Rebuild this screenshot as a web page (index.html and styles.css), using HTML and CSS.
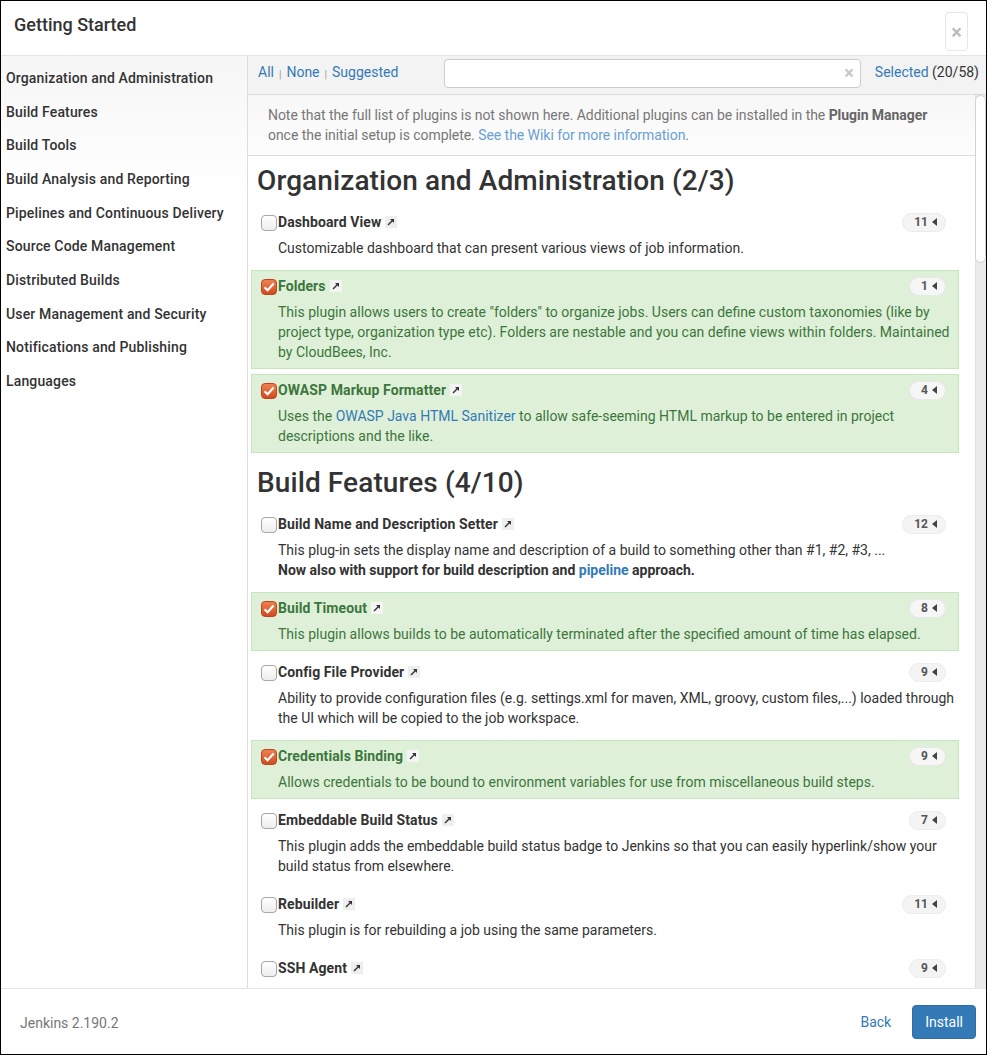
FILE: index.html
```html
<!DOCTYPE html>
<html>
<head>
<meta charset="utf-8">
<title>Getting Started</title>
<link rel="stylesheet" href="styles.css">
</head>
<body>
<div class="modal">
  <div class="modal-header">
    <h4 class="modal-title">Getting Started</h4>
    <button class="close" type="button">×</button>
  </div>
  <div class="modal-body">
    <ul class="categories">
      <li>Organization and Administration</li>
      <li>Build Features</li>
      <li>Build Tools</li>
      <li>Build Analysis and Reporting</li>
      <li>Pipelines and Continuous Delivery</li>
      <li>Source Code Management</li>
      <li>Distributed Builds</li>
      <li>User Management and Security</li>
      <li>Notifications and Publishing</li>
      <li>Languages</li>
    </ul>
    <div class="panel">
      <div class="toolbar">
        <div class="filters"><a>All</a><span class="sep">|</span><a>None</a><span class="sep">|</span><a>Suggested</a></div>
        <div class="search"><input type="text"><span class="clear">×</span></div>
        <div class="selected"><a>Selected</a> (20/58)</div>
      </div>
      <div class="scroll-wrap">
      <div class="scroll">
        <div class="note">Note that the full list of plugins is not shown here. Additional plugins can be installed in the <b>Plugin Manager</b> once the initial setup is complete. <a>See the Wiki for more information</a>.</div>
        <div class="plugins">
          <h2>Organization and Administration (2/3)</h2>

          <div class="row">
            <div class="title"><span class="cb"></span>Dashboard View<span class="ext"><svg viewBox="0 0 12 12" width="12" height="12"><path d="M3 9L8.5 3.5" stroke="#333" stroke-width="1.4"/><path d="M5 3H9V7Z" fill="#333"/></svg></span><span class="badge">11<i class="caret"></i></span></div>
            <div class="desc">Customizable dashboard that can present various views of job information.</div>
          </div>

          <div class="row on">
            <div class="title"><span class="cb"><svg viewBox="0 0 16 16" width="16" height="16"><path d="M3.5 8.2L6.6 11.2L12.6 4.6" fill="none" stroke="#fff" stroke-width="2.2"/></svg></span>Folders<span class="ext"><svg viewBox="0 0 12 12" width="12" height="12"><path d="M3 9L8.5 3.5" stroke="#333" stroke-width="1.4"/><path d="M5 3H9V7Z" fill="#333"/></svg></span><span class="badge">1<i class="caret"></i></span></div>
            <div class="desc">This plugin allows users to create "folders" to organize jobs. Users can define custom taxonomies (like by project type, organization type etc). Folders are nestable and you can define views within folders. Maintained by CloudBees, Inc.</div>
          </div>

          <div class="row on">
            <div class="title"><span class="cb"><svg viewBox="0 0 16 16" width="16" height="16"><path d="M3.5 8.2L6.6 11.2L12.6 4.6" fill="none" stroke="#fff" stroke-width="2.2"/></svg></span>OWASP Markup Formatter<span class="ext"><svg viewBox="0 0 12 12" width="12" height="12"><path d="M3 9L8.5 3.5" stroke="#333" stroke-width="1.4"/><path d="M5 3H9V7Z" fill="#333"/></svg></span><span class="badge">4<i class="caret"></i></span></div>
            <div class="desc">Uses the <a>OWASP Java HTML Sanitizer</a> to allow safe-seeming HTML markup to be entered in project descriptions and the like.</div>
          </div>

          <h2>Build Features (4/10)</h2>

          <div class="row">
            <div class="title"><span class="cb"></span>Build Name and Description Setter<span class="ext"><svg viewBox="0 0 12 12" width="12" height="12"><path d="M3 9L8.5 3.5" stroke="#333" stroke-width="1.4"/><path d="M5 3H9V7Z" fill="#333"/></svg></span><span class="badge">12<i class="caret"></i></span></div>
            <div class="desc">This plug-in sets the display name and description of a build to something other than #1, #2, #3, ...<br><b>Now also with support for build description and <a>pipeline</a> approach.</b></div>
          </div>

          <div class="row on">
            <div class="title"><span class="cb"><svg viewBox="0 0 16 16" width="16" height="16"><path d="M3.5 8.2L6.6 11.2L12.6 4.6" fill="none" stroke="#fff" stroke-width="2.2"/></svg></span>Build Timeout<span class="ext"><svg viewBox="0 0 12 12" width="12" height="12"><path d="M3 9L8.5 3.5" stroke="#333" stroke-width="1.4"/><path d="M5 3H9V7Z" fill="#333"/></svg></span><span class="badge">8<i class="caret"></i></span></div>
            <div class="desc">This plugin allows builds to be automatically terminated after the specified amount of time has elapsed.</div>
          </div>

          <div class="row">
            <div class="title"><span class="cb"></span>Config File Provider<span class="ext"><svg viewBox="0 0 12 12" width="12" height="12"><path d="M3 9L8.5 3.5" stroke="#333" stroke-width="1.4"/><path d="M5 3H9V7Z" fill="#333"/></svg></span><span class="badge">9<i class="caret"></i></span></div>
            <div class="desc">Ability to provide configuration files (e.g. settings.xml for maven, XML, groovy, custom files,...) loaded through the UI which will be copied to the job workspace.</div>
          </div>

          <div class="row on">
            <div class="title"><span class="cb"><svg viewBox="0 0 16 16" width="16" height="16"><path d="M3.5 8.2L6.6 11.2L12.6 4.6" fill="none" stroke="#fff" stroke-width="2.2"/></svg></span>Credentials Binding<span class="ext"><svg viewBox="0 0 12 12" width="12" height="12"><path d="M3 9L8.5 3.5" stroke="#333" stroke-width="1.4"/><path d="M5 3H9V7Z" fill="#333"/></svg></span><span class="badge">9<i class="caret"></i></span></div>
            <div class="desc">Allows credentials to be bound to environment variables for use from miscellaneous build steps.</div>
          </div>

          <div class="row">
            <div class="title"><span class="cb"></span>Embeddable Build Status<span class="ext"><svg viewBox="0 0 12 12" width="12" height="12"><path d="M3 9L8.5 3.5" stroke="#333" stroke-width="1.4"/><path d="M5 3H9V7Z" fill="#333"/></svg></span><span class="badge">7<i class="caret"></i></span></div>
            <div class="desc">This plugin adds the embeddable build status badge to Jenkins so that you can easily hyperlink/show your build status from elsewhere.</div>
          </div>

          <div class="row">
            <div class="title"><span class="cb"></span>Rebuilder<span class="ext"><svg viewBox="0 0 12 12" width="12" height="12"><path d="M3 9L8.5 3.5" stroke="#333" stroke-width="1.4"/><path d="M5 3H9V7Z" fill="#333"/></svg></span><span class="badge">11<i class="caret"></i></span></div>
            <div class="desc">This plugin is for rebuilding a job using the same parameters.</div>
          </div>

          <div class="row">
            <div class="title"><span class="cb"></span>SSH Agent<span class="ext"><svg viewBox="0 0 12 12" width="12" height="12"><path d="M3 9L8.5 3.5" stroke="#333" stroke-width="1.4"/><path d="M5 3H9V7Z" fill="#333"/></svg></span><span class="badge">9<i class="caret"></i></span></div>
            <div class="desc">This plugin allows you to provide SSH credentials to builds via a ssh-agent in Jenkins.</div>
          </div>
        </div>
      </div>
      <div class="scrollbar"><div class="thumb"></div></div>
      </div>
    </div>
  </div>
  <div class="modal-footer">
    <span class="version">Jenkins 2.190.2</span>
    <div class="actions"><a class="back">Back</a><button class="btn" type="button">Install</button></div>
  </div>
</div>
</body>
</html>
```

FILE: styles.css
```css
* { box-sizing: border-box; }
html, body { margin: 0; padding: 0; }
body {
  background: #fff;
  font-family: Roboto, "Liberation Sans", sans-serif;
  font-size: 14px;
  line-height: 20px;
  color: #333;
}
a { color: #337ab7; cursor: pointer; }

.modal {
  width: 987px;
  height: 1055px;
  border: 1px solid #000;
  display: flex;
  flex-direction: column;
  background: #fff;
  box-shadow: 0 5px 0 #8c8c8c;
}

.modal-header {
  height: 55px;
  flex: none;
  border-bottom: 1px solid #e5e5e5;
  display: flex;
  justify-content: space-between;
  align-items: flex-start;
  padding: 0 18px 0 13px;
}
.modal-title {
  margin: 13px 0 0;
  font-size: 18px;
  line-height: 22px;
  font-weight: 500;
  color: #333;
}
.close {
  margin-top: 11px;
  width: 23px;
  height: 39px;
  border: 1px solid #e6e6e6;
  border-radius: 4px;
  background: #fff;
  color: #bbb;
  font-family: inherit;
  font-size: 20px;
  font-weight: 700;
  padding: 0;
  line-height: 1;
}

.modal-body {
  flex: 1;
  min-height: 0;
  display: flex;
}

.categories {
  list-style: none;
  margin: 0;
  padding: 6px 0 0;
  width: 247px;
  flex: none;
  border-right: 1px solid #ddd;
  background: linear-gradient(#f6f6f6, #fff 140px);
}
.categories li {
  padding: 7px 5px;
  line-height: 19.67px;
  font-weight: 500;
  letter-spacing: 0.15px;
  color: #333;
  white-space: nowrap;
}

.panel {
  flex: 1;
  min-width: 0;
  display: flex;
  flex-direction: column;
}
.toolbar {
  flex: none;
  height: 39px;
  border-bottom: 1px solid #dcdcdc;
  background: #f3f3f3;
  display: flex;
  align-items: flex-start;
  padding: 3px 7px 0 10px;
}
.filters {
  width: 186px;
  flex: none;
  margin-top: 3px;
}
.filters a { text-decoration: none; }
.sep {
  color: #999;
  font-size: 10px;
  margin: 0 5px;
  position: relative;
  top: 1px;
}
.search {
  flex: 1;
  position: relative;
}
.search input {
  display: block;
  width: 100%;
  height: 29px;
  border: 1px solid #ccc;
  border-radius: 4px;
  background: #fff;
}
.clear {
  position: absolute;
  right: 7px;
  top: 4px;
  color: #c8c8c8;
  font-size: 18px;
  font-weight: 700;
}
.selected {
  margin: 3px 0 0 14px;
  white-space: nowrap;
}
.selected a { text-decoration: none; }

.scroll-wrap {
  flex: 1;
  min-height: 0;
  display: flex;
}
.scroll {
  flex: 1;
  min-width: 0;
  overflow: hidden;
}
.scrollbar {
  width: 11px;
  flex: none;
  background: #ebebeb;
  border-left: 1px solid #e0e0e0;
}
.thumb {
  height: 168px;
  margin-left: -1px;
  background: #fff;
  border: 1px solid #d2d2d2;
  border-radius: 6px;
}

.note {
  padding: 10px 20px;
  border-bottom: 1px solid #ddd;
  background: linear-gradient(#f7f7f7, #fdfdfd);
  color: #777;
  letter-spacing: -0.05px;
}
.note b { color: #666; }
.note a { color: #6aa0d4; text-decoration: none; }

.plugins {
  padding: 0 16px 0 3px;
}
.plugins h2 {
  margin: 0;
  padding: 10px 5px 10px 6px;
  font-size: 28px;
  line-height: 30px;
  font-weight: 500;
  letter-spacing: 0.1px;
  color: #333;
}

.row {
  border: 1px solid transparent;
  padding: 5px 0 6px 9px;
  margin-bottom: 5px;
}
.row.on {
  background: #dff0d8;
  border-color: #c9e5bd;
  color: #3c763d;
}
.title {
  display: flex;
  align-items: center;
  font-weight: 700;
  letter-spacing: 0.1px;
  line-height: 20px;
}
.cb {
  width: 16px;
  height: 16px;
  flex: none;
  margin: 1px 1px 0 0;
  border: 1px solid #a6a6a6;
  border-radius: 4px;
  background: linear-gradient(#fff, #ededed);
  display: flex;
  align-items: center;
  justify-content: center;
  overflow: hidden;
}
.row.on .cb {
  border-color: #b9461f;
  background: linear-gradient(#ef8150, #cf4b22);
}
.cb svg { display: block; flex: none; }
.ext {
  width: 12px;
  height: 12px;
  margin-left: 4px;
  background: #eee;
  display: inline-flex;
}
.row.on .ext { background: #f4f4f4; }
.ext svg { display: block; }
.badge {
  margin-left: auto;
  margin-right: 12px;
  height: 19px;
  padding: 0 8px 0 11px;
  border-radius: 10px;
  background: #f4f4f4;
  border: 1px solid #ececec;
  font-size: 12px;
  font-weight: 700;
  letter-spacing: 0;
  color: #555;
  display: inline-flex;
  align-items: center;
  gap: 4px;
}
.row.on .badge { background: #f6f6f6; border-color: #e8e8e8; }
.caret {
  width: 0;
  height: 0;
  border-right: 5px solid #444;
  border-top: 4.5px solid transparent;
  border-bottom: 4.5px solid transparent;
}
.desc {
  margin-top: 6px;
  padding-left: 17px;
}
.desc a { text-decoration: none; }

.modal-footer {
  flex: none;
  height: 66px;
  border-top: 1px solid #e5e5e5;
  display: flex;
  align-items: center;
  justify-content: space-between;
  padding: 0 10px 0 19px;
}
.version { color: #777; margin-top: 3px; }
.actions { display: flex; align-items: center; }
.back { text-decoration: none; margin-right: 21px; }
.btn {
  height: 34px;
  padding: 0 12px;
  border: 1px solid #2e6da4;
  border-radius: 4px;
  background: #337ab7;
  color: #fff;
  font-family: inherit;
  font-size: 14px;
  line-height: 20px;
}
```
